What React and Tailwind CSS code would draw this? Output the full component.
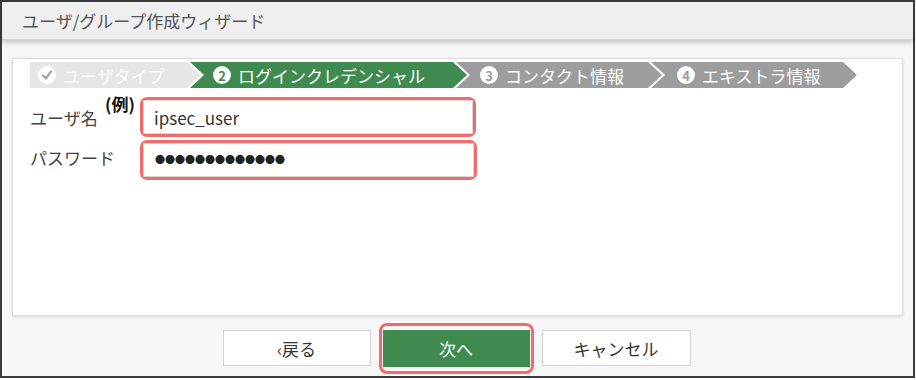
const jp = "font-['Noto_Sans_CJK_JP',sans-serif]";

function Step({ outer, inner, mark, label }) {
  return (
    <div
      className={`h-[26px] shrink-0 bg-white [clip-path:polygon(0_0,calc(100%_-_14px)_0,100%_50%,calc(100%_-_14px)_100%,0_100%)] ${outer}`}
    >
      <div
        className={`flex h-full w-full items-center gap-[7px] text-[17px] leading-none [clip-path:polygon(0_0,calc(100%_-_17px)_0,calc(100%_-_3px)_50%,calc(100%_-_17px)_100%,0_100%)] ${inner}`}
      >
        {mark}
        <span>{label}</span>
      </div>
    </div>
  );
}

function NumberMark({ n, color }) {
  return (
    <span
      className={`flex h-[18px] w-[18px] items-center justify-center rounded-full bg-white text-[13px] font-bold leading-none ${color}`}
    >
      {n}
    </span>
  );
}

function CheckMark() {
  return (
    <span className="flex h-[18px] w-[18px] items-center justify-center rounded-full bg-white">
      <svg width="12" height="12" viewBox="0 0 12 12">
        <path d="M2 6.5 L5 9.5 L10 2.5" fill="none" stroke="#a5a5a5" strokeWidth="2.2" strokeLinecap="round" strokeLinejoin="round" />
      </svg>
    </span>
  );
}

export default function App() {
  return (
    <div className={`${jp} flex h-[378px] w-[915px] flex-col border-2 border-[#3b3b3b] bg-[#f7f7f7] text-[#444]`}>
      {/* title bar */}
      <div className="flex h-[38px] shrink-0 items-center border-b border-[#d6d6d6] bg-[#efefef] pl-[20px] text-[17px] leading-none text-[#555] shadow-[0_3px_4px_rgba(0,0,0,0.18)]">
        ユーザ/グループ作成ウィザード
      </div>

      {/* body */}
      <div className="mx-[10px] mt-[18px] flex h-[258px] flex-col border border-[#dcdcdc] bg-white pt-[3px] shadow-[0_1px_3px_rgba(0,0,0,0.12)]">
        <div className="flex pl-[17px]">
          <Step
            outer="relative z-40 w-[174px]"
            inner="bg-[#e6e6e6] pl-[8px] text-[#fcfcfc]"
            mark={<CheckMark />}
            label="ユーザタイプ"
          />
          <Step
            outer="relative z-30 -ml-[14px] w-[280px]"
            inner="bg-[#3e8a4f] pl-[23px] text-white"
            mark={<NumberMark n="2" color="text-[#3e8a4f]" />}
            label="ログインクレデンシャル"
          />
          <Step
            outer="relative z-20 -ml-[14px] w-[209px]"
            inner="bg-[#9d9d9d] pl-[24px] text-white"
            mark={<NumberMark n="3" color="text-[#9d9d9d]" />}
            label="コンタクト情報"
          />
          <Step
            outer="relative z-10 -ml-[14px] w-[209px]"
            inner="bg-[#9d9d9d] pl-[26px] text-white"
            mark={<NumberMark n="4" color="text-[#9d9d9d]" />}
            label="エキストラ情報"
          />
        </div>

        <div className="relative mt-[9px] flex flex-col gap-[3px] pl-[17px]">
          <span className="absolute left-[92px] top-[-2px] text-[17px] font-bold leading-none text-[#111]">
            (例)
          </span>
          <div className="flex items-center">
            <span className="w-[110px] text-[17px] leading-none">ユーザ名</span>
            <div className="flex h-[40px] w-[336px] items-center rounded-[7px] border-[3px] border-[#f06c6c] bg-white">
              <div className="flex h-full w-full items-center border border-[#d8d8d8] pl-[10px] text-[17px] leading-none text-[#333]">
                ipsec_user
              </div>
            </div>
          </div>
          <div className="flex items-center">
            <span className="w-[110px] pb-[6px] text-[17px] leading-none">パスワード</span>
            <div className="flex h-[40px] w-[337px] items-center rounded-[7px] border-[3px] border-[#f06c6c] bg-white">
              <div className="flex h-full w-full items-center border border-[#d8d8d8] pl-[11px] text-[10px] leading-none tracking-[0px] text-[#222]">
                ●●●●●●●●●●●●●
              </div>
            </div>
          </div>
        </div>
      </div>

      {/* footer */}
      <div className="mt-[14px] flex justify-center gap-[12px] pr-[2px]">
        <button type="button" className="flex h-[36px] w-[148px] items-center justify-center border border-[#d2d2d2] bg-white text-[17px] leading-none text-[#333]">
          ‹戻る
        </button>
        <div className="relative">
          <span className="absolute -inset-x-[4px] -inset-y-[7px] rounded-[8px] border-[3px] border-[#f06c6c]" />
          <button type="button" className="flex h-[37px] w-[147px] items-center justify-center bg-[#3e8a4f] text-[17px] leading-none text-white">
            次へ
          </button>
        </div>
        <button type="button" className="flex h-[36px] w-[149px] items-center justify-center border border-[#d2d2d2] bg-white text-[17px] leading-none text-[#333]">
          キャンセル
        </button>
      </div>
    </div>
  );
}
